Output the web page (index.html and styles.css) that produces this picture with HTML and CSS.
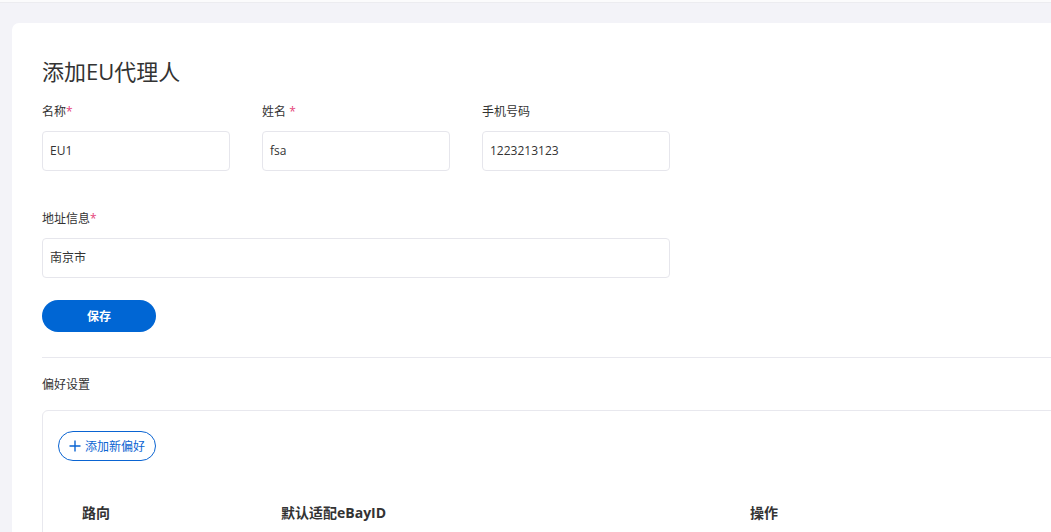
FILE: index.html
```html
<!DOCTYPE html>
<html lang="zh">
<head>
<meta charset="utf-8">
<link rel="stylesheet" href="styles.css">
</head>
<body>
<div class="topline"></div>
<div class="page">
  <div class="card">
    <h1 class="title">添加EU代理人</h1>
    <div class="row">
      <div class="field">
        <label class="label">名称<span class="req">*</span></label>
        <div class="input">EU1</div>
      </div>
      <div class="field">
        <label class="label">姓名 <span class="req">*</span></label>
        <div class="input">fsa</div>
      </div>
      <div class="field">
        <label class="label">手机号码</label>
        <div class="input">1223213123</div>
      </div>
    </div>
    <div class="field wide">
      <label class="label">地址信息<span class="req">*</span></label>
      <div class="input">南京市</div>
    </div>
    <button class="save">保存</button>
    <div class="divider"></div>
    <div class="section">偏好设置</div>
    <div class="prefbox">
      <button class="addbtn"><svg width="12" height="12" viewBox="0 0 12 12"><path d="M6 0.5v11M0.5 6h11" stroke="#0a64d2" stroke-width="1.4" fill="none"/></svg>添加新偏好</button>
      <div class="thead">
        <div class="th">路向</div>
        <div class="th">默认适配eBayID</div>
        <div class="th">操作</div>
      </div>
    </div>
  </div>
</div>
</body>
</html>
```

FILE: styles.css
```css
* { box-sizing: border-box; }
html, body { margin: 0; padding: 0; }
body {
  background: #f3f3f8;
  font-family: "Open Sans", "Noto Sans CJK SC", sans-serif;
  color: #333;
  overflow: hidden;
  height: 532px;
}
.topline {
  height: 3px;
  background: #fbfbfc;
  border-bottom: 1px solid #ececf0;
}
.page {
  padding: 20px 0 0 12px;
}
.card {
  background: #fff;
  border-radius: 7px 0 0 0;
  margin-right: -30px;
  padding: 33px 0 0 30px;
  height: 509px;
  overflow: hidden;
}
.title {
  margin: 0 0 17px;
  font-size: 22px;
  font-weight: 400;
  line-height: 30px;
  color: #333;
}
.row {
  display: flex;
  gap: 32px;
  margin-bottom: 39px;
}
.field { width: 188px; }
.field.wide { width: 628px; margin-bottom: 22px; }
.label {
  display: block;
  font-size: 12px;
  line-height: 18px;
  margin-bottom: 10px;
  color: #333;
}
.req { color: #e5457a; }
.input {
  height: 40px;
  border: 1px solid #e6e6ec;
  border-radius: 4px;
  padding: 0 7px;
  font-size: 12px;
  line-height: 38px;
  color: #333;
}
.save {
  display: block;
  width: 114px;
  height: 32px;
  border: none;
  border-radius: 16px;
  background: #0066d4;
  color: #fff;
  font-family: inherit;
  font-size: 12px;
  font-weight: 700;
  margin: 0 0 25px;
  padding: 0;
}
.divider {
  height: 1px;
  background: #e8e8ee;
  margin-bottom: 18px;
}
.section {
  font-size: 12px;
  line-height: 18px;
  margin-bottom: 16px;
}
.prefbox {
  border: 1px solid #e8e8ee;
  border-radius: 6px;
  padding: 20px 0 0 15px;
  height: 200px;
}
.addbtn {
  display: inline-flex;
  align-items: center;
  gap: 4px;
  height: 30px;
  width: 98px;
  border: 1px solid #0a64d2;
  border-radius: 15px;
  background: #fff;
  color: #0a64d2;
  font-family: inherit;
  font-size: 12px;
  padding: 0 0 0 10px;
}
.thead {
  display: grid;
  grid-template-columns: 199px 469px 1fr;
  padding-left: 24px;
  margin-top: 42px;
}
.th {
  font-size: 14px;
  font-weight: 700;
  line-height: 20px;
  color: #333;
}
```
